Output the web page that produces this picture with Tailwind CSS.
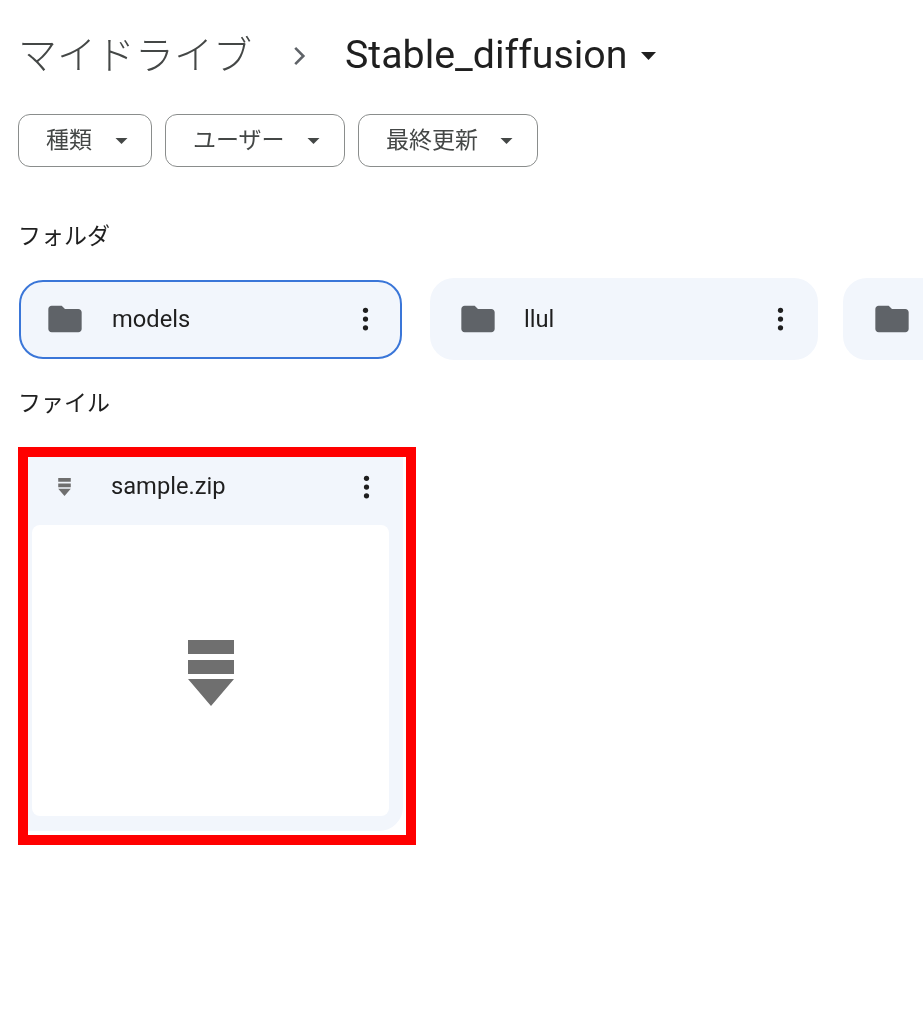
<!DOCTYPE html>
<html lang="ja">
<head>
    <meta charset="UTF-8" />
    <meta name="viewport" content="width=device-width, initial-scale=1.0">
    <title>Stable_diffusion - Google ドライブ</title>
    <script src="https://cdn.jsdelivr.net/npm/@tailwindcss/browser@4"></script>
</head>
<body class="h-[1024px] overflow-hidden bg-white font-['Roboto','Noto_Sans_CJK_JP',sans-serif]">

    <main class="pl-[18px] pt-[29px] blur-[0.4px]">
        <!-- breadcrumb -->
        <div class="flex items-center h-[54px] leading-none">
            <span class="text-[39px] text-[#444746] font-light">マイドライブ</span>
            <svg class="ml-[34px] w-[26px] h-[26px] text-[#5f6368]" viewBox="0 0 24 24" fill="none" stroke="currentColor" stroke-width="2.4"><path d="M8.500 4.500 16 12l-7.500 7.500" /></svg>
            <span class="ml-[33px] text-[39.300px] text-[#1f1f1f]">Stable_diffusion</span>
            <svg class="ml-[14px] w-[15px] h-[8px] text-[#1f1f1f]" viewBox="0 0 15 8" fill="currentColor"><path d="M0 0h15L7.500 8z" /></svg>
        </div>

        <!-- filters -->
        <div class="flex gap-[13px] mt-[31px]">
            <button class="flex items-center w-[134px] h-[53px] pl-[27px] border border-[#8a8d8c] rounded-[12px] text-[23px] text-[#444746]"><span class="pt-[2px]">種類</span><svg class="ml-[23px] w-[13px] h-[6px]" viewBox="0 0 14 7" fill="currentColor"><path d="M0 0h14L7 7z" /></svg></button>
            <button class="flex items-center w-[180px] h-[53px] pl-[27px] border border-[#8a8d8c] rounded-[12px] text-[23px] text-[#444746]"><span class="pt-[2px]">ユーザー</span><svg class="ml-[22px] w-[13px] h-[6px]" viewBox="0 0 14 7" fill="currentColor"><path d="M0 0h14L7 7z" /></svg></button>
            <button class="flex items-center w-[180px] h-[53px] pl-[27px] border border-[#8a8d8c] rounded-[12px] text-[23px] text-[#444746]"><span class="pt-[2px]">最終更新</span><svg class="ml-[22px] w-[13px] h-[6px]" viewBox="0 0 14 7" fill="currentColor"><path d="M0 0h14L7 7z" /></svg></button>
        </div>

        <!-- folders -->
        <h2 class="mt-[52px] h-[36px] text-[23px] leading-[36px] text-[#1f1f1f]">フォルダ</h2>
        <div class="flex items-center w-[905px] mt-[23px] overflow-hidden">
            <div class="flex items-center shrink-0 w-[383px] h-[79px] ml-[1px] pl-[24px] bg-[#f2f6fc] border-2 border-[#3a76d8] rounded-[24px]">
                <svg class="w-[40px] h-[40px] text-[#5f6368]" viewBox="0 0 24 24" fill="currentColor"><path d="M10 4H4c-1.100 0-2 .9-2 2v12c0 1.100.9 2 2 2h16c1.100 0 2-.9 2-2V8c0-1.100-.9-2-2-2h-8l-2-2z" /></svg>
                <span class="ml-[27px] pt-[1px] text-[23.700px] text-[#1f1f1f]">models</span>
                <svg class="ml-auto mr-[31px] w-[7px] h-[26px] text-[#1f1f1f]" viewBox="0 0 8 28" fill="currentColor"><circle cx="4" cy="4" r="3" /><circle cx="4" cy="14" r="3" /><circle cx="4" cy="24" r="3" /></svg>
            </div>
            <div class="flex items-center shrink-0 w-[388px] h-[82px] ml-[28px] pl-[28px] bg-[#f2f6fc] rounded-[24px]">
                <svg class="w-[40px] h-[40px] text-[#5f6368]" viewBox="0 0 24 24" fill="currentColor"><path d="M10 4H4c-1.100 0-2 .9-2 2v12c0 1.100.9 2 2 2h16c1.100 0 2-.9 2-2V8c0-1.100-.9-2-2-2h-8l-2-2z" /></svg>
                <span class="ml-[26px] pt-[1px] text-[23.700px] text-[#1f1f1f]">llul</span>
                <svg class="ml-auto mr-[34px] w-[7px] h-[26px] text-[#1f1f1f]" viewBox="0 0 8 28" fill="currentColor"><circle cx="4" cy="4" r="3" /><circle cx="4" cy="14" r="3" /><circle cx="4" cy="24" r="3" /></svg>
            </div>
            <div class="flex items-center shrink-0 w-[200px] h-[82px] ml-[25px] pl-[29px] bg-[#f2f6fc] rounded-[24px]">
                <svg class="w-[40px] h-[40px] text-[#5f6368]" viewBox="0 0 24 24" fill="currentColor"><path d="M10 4H4c-1.100 0-2 .9-2 2v12c0 1.100.9 2 2 2h16c1.100 0 2-.9 2-2V8c0-1.100-.9-2-2-2h-8l-2-2z" /></svg>
            </div>
        </div>

        <!-- files -->
        <h2 class="mt-[26px] h-[36px] text-[23px] leading-[36px] text-[#1f1f1f]">ファイル</h2>
        <div class="w-[398px] h-[398px] mt-[25px] border-[10px] border-[#ff0000]">
            <div class="flex flex-col w-[375px] h-[374px] bg-[#f2f6fc] rounded-br-[24px]">
                <div class="flex items-center h-[68px] shrink-0 pb-[9px] pl-[30px]">
                    <svg class="w-[13px] h-[18px] text-[#6f6f6f]" viewBox="0 0 46 66" fill="currentColor"><path d="M0 0h46v14H0zM0 20h46v14H0zM0 39h46L23 66z" /></svg>
                    <span class="ml-[40px] text-[23.700px] text-[#1f1f1f]">sample.zip</span>
                    <svg class="ml-auto mr-[33px] w-[7px] h-[26px] text-[#1f1f1f]" viewBox="0 0 8 28" fill="currentColor"><circle cx="4" cy="4" r="3" /><circle cx="4" cy="14" r="3" /><circle cx="4" cy="24" r="3" /></svg>
                </div>
                <div class="flex items-center justify-center w-[357px] h-[291px] pt-[4px] ml-[4px] bg-white rounded-[8px]">
                    <svg class="w-[46px] h-[66px] text-[#6f6f6f]" viewBox="0 0 46 66" fill="currentColor"><path d="M0 0h46v14H0zM0 20h46v14H0zM0 39h46L23 66z" /></svg>
                </div>
            </div>
        </div>
    </main>

</body>
</html>
